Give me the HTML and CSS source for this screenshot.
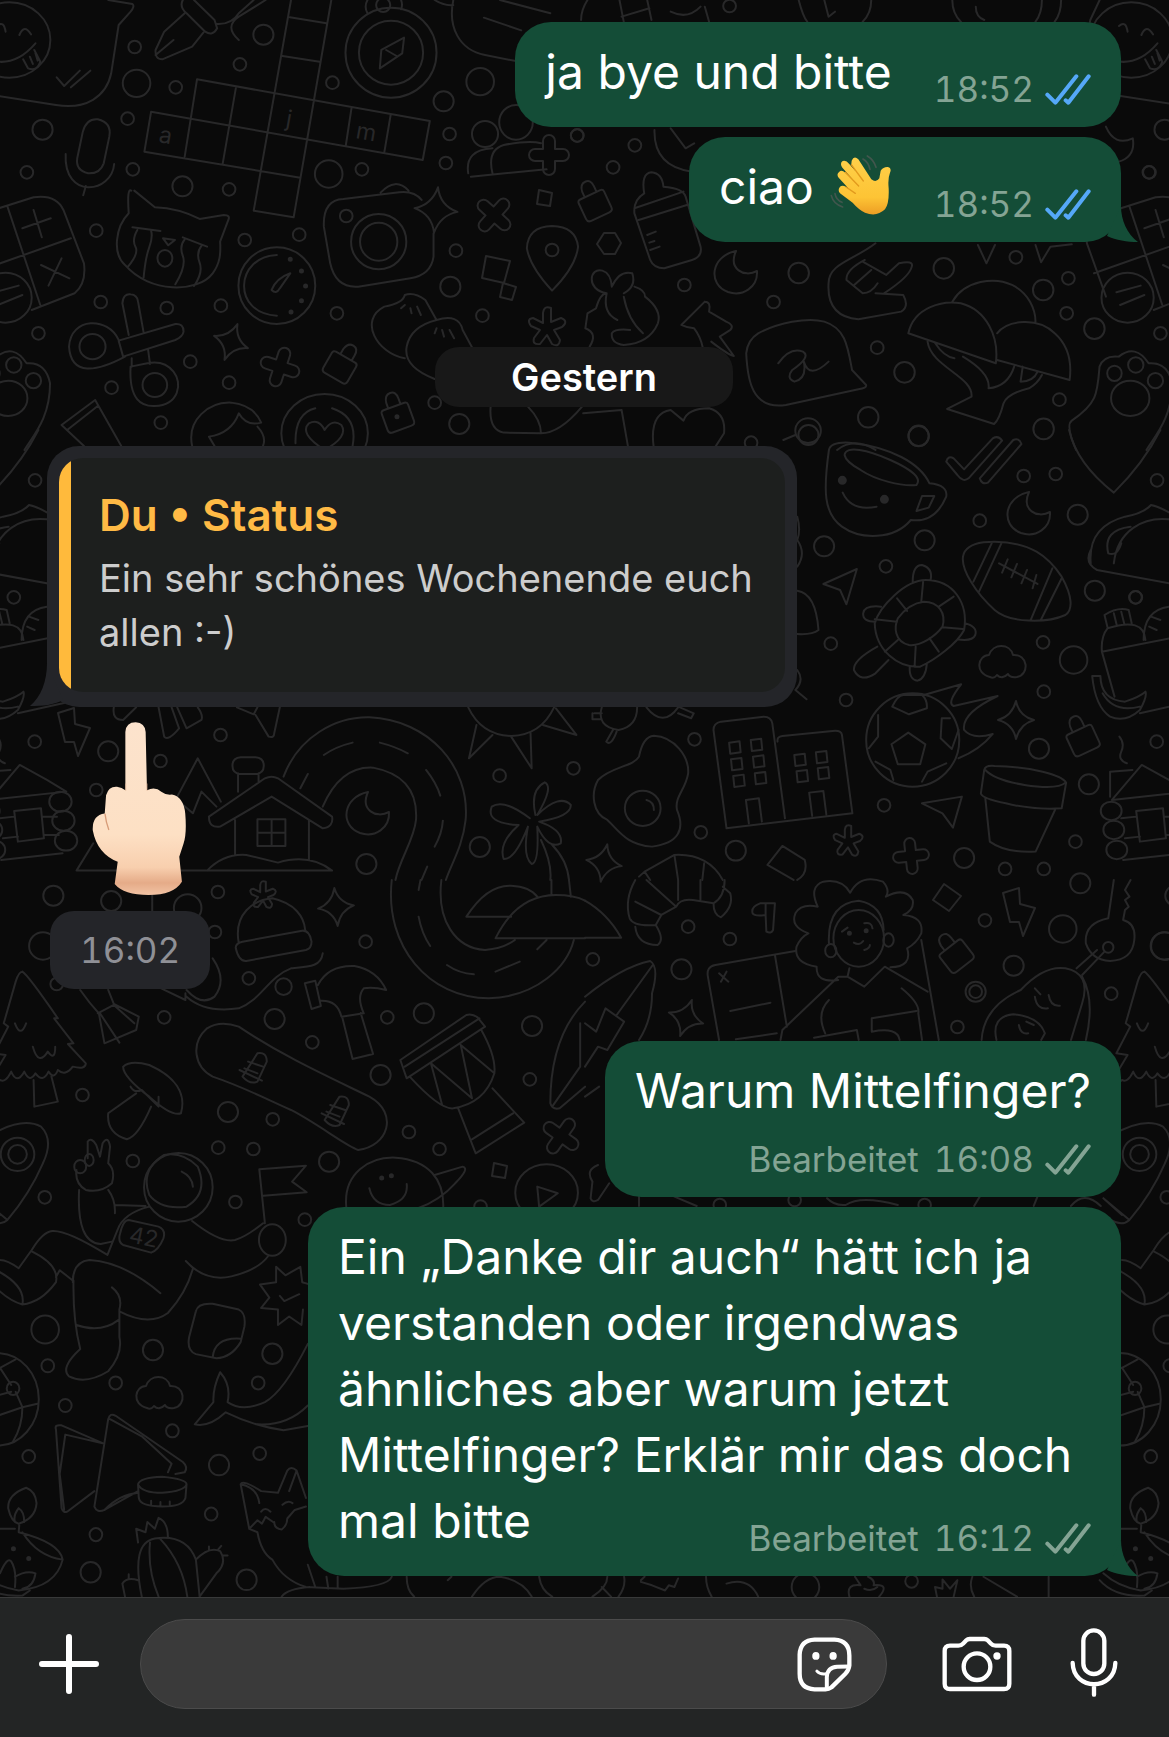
FILE: index.html
```html
<!DOCTYPE html>
<html lang="de">
<head>
<meta charset="utf-8">
<meta name="viewport" content="width=device-width, initial-scale=1">
<title>Chat</title>
<link rel="stylesheet" href="styles.css">
</head>
<body>
<main class="chat">
<svg class="wallpaper" viewBox="0 0 1169 1597" preserveAspectRatio="xMinYMin slice" aria-hidden="true">
<defs>
<ellipse id="s" rx="17" ry="19"/><ellipse id="m" rx="27" ry="30"/><ellipse id="l" rx="37" ry="41"/>
<ellipse id="s2" rx="15" ry="19"/><ellipse id="m2" rx="24" ry="31"/>
<path id="spark" d="M0-19Q3-4 18 0Q4 4 0 19Q-3 4-18 0Q-4-4 0-19Z"/>
<path id="plus" d="M-6-14a6 6 0 0 1 12 0v8h8a6 6 0 0 1 0 12h-8v8a6 6 0 0 1-12 0v-8h-8a6 6 0 0 1 0-12h8Z"/>
<path id="moon" d="M0-21C-25-16-29 12-8 20C7 25 22 15 21-1C8 6-8-3 0-21Z"/>
<path id="cloud" d="M-13 14C-29 10-25-8-14-8C-10-20 7-20 10-8C25-9 27 11 14 14Q7 15 5 11Q-1 17-6 12Q-9 16-13 14Z"/>
<path id="bolt" d="M-17-17L-1-22 0-6 15-2 3 26-1 12-10 12Z"/>
<path id="tag" d="M-11-9h22q3 0 3 3v17q0 4-4 4h-20q-4 0-4-4v-17q0-3 3-3ZM-6-9v-6q1-8 7-8t6 8v6"/>
<path id="aster" d="M-4-4V-14q1-8 8-5v14l10-4q8 3 1 9l-8 3 6 10q-1 8-8 4L0 8l-7 9q-8 1-6-6l6-8-9-4q-5-7 2-8Z"/>
<g id="doodles">
<g>
<use href="#spark" transform="translate(231 342) rotate(20)"/><use href="#spark" transform="translate(436 210) rotate(5) scale(1.2)"/><use href="#spark" transform="translate(1016 720)"/><use href="#spark" transform="translate(604 863) rotate(10)"/><use href="#spark" transform="translate(336 907) rotate(-5)"/><use href="#spark" transform="translate(686 1018) rotate(18)"/>
<use href="#plus" transform="translate(280 367) rotate(18)"/><use href="#plus" transform="translate(494 215) rotate(42)"/><use href="#plus" transform="translate(549 155)"/><use href="#plus" transform="translate(911 856) rotate(-6) scale(.9)"/><use href="#plus" transform="translate(561 1136) rotate(35)"/>
<use href="#moon" transform="translate(736 272)"/><use href="#moon" transform="translate(368 813)"/><use href="#moon" transform="translate(1029 513)"/>
<use href="#aster" transform="translate(547 327)"/><use href="#aster" transform="translate(848 841) scale(.8)"/><use href="#aster" transform="translate(263 895) scale(.7)"/>
<use href="#cloud" transform="translate(1003 663)"/><use href="#cloud" transform="translate(160 1394)"/>
<use href="#bolt" transform="translate(75 730)"/><use href="#bolt" transform="translate(1020 910)"/>
<use href="#tag" transform="translate(341 365) rotate(30)"/><use href="#tag" transform="translate(397 415) rotate(-20)"/><use href="#tag" transform="translate(594 203) rotate(-25)"/><use href="#tag" transform="translate(955 954) rotate(-38)"/><use href="#tag" transform="translate(1082 738) rotate(-25)"/>
<path d="M539 190l13 3-2 13-13-2ZM486 256l24 5-6 22-22-5ZM503 283l13 4-4 13-12-3ZM944 884l17 12-12 15-16-11ZM494 1163l13 3-2 12-13-2ZM604 233l11 0 6 10-6 11h-11l-7-10Z"/>
</g>
<g class="letters"><text x="158" y="142" transform="rotate(10 158 142)">a</text><text x="285" y="126" transform="rotate(10 285 126)">j</text><text x="355" y="138" transform="rotate(10 355 138)">m</text><text x="128" y="1242" transform="rotate(12 128 1242)">42</text></g>
<g transform="scale(.3731 .3333)">
<ellipse cx="25" cy="120" rx="110" ry="113"/>
<path d="M290 0L355 12Q362 18 350 35L318 75L298 220C285 290 230 330 150 315L-60 278Q-110 250-105 180L-85 60-60 0M52 105Q65 70 83 103M-8 78Q10 60 15 95M-50 170Q30 215 95 130M92 150L108 185Q100 215 75 205L62 178M80 170l8 22M95 160l6 22M152 232l20 26 42-46M190 262l52-50"/>
<path d="M222 395Q232 355 262 358Q300 368 293 410L278 490Q268 522 236 520Q202 510 207 475ZM176 462C170 600 300 580 306 492M230 558l-7 28"/>
<path d="M495 40L440 95 417 150Q415 178 435 178L515 140 545 98M417 165L465 120M490 0Q480 20 500 40L550 95Q570 110 582 85L575 60 520 0M580 72Q620 75 640 40L680 0M712 0L640 50Q600 80 640 120"/>
<path d="M528 238L1152 363 1133 480 405 335 387 455 805 533M528 238L495 470M632 265L597 490M780 0L680 632 787 652 888 0M777 52l98 18M757 168l100 17M942 325l-15 110M1047 345l-17 112"/>
<ellipse cx="1048" cy="158" rx="122" ry="135"/><ellipse cx="1048" cy="158" rx="86" ry="96"/><ellipse cx="1027" cy="15" rx="19" ry="21"/>
<path d="M1083 113L1078 160 1018 205 1022 150ZM1035 150l28 18M985 40Q975 20 985 0M1075 28Q1080 15 1075 0M1215 0C1200 80 1230 150 1300 165L1400 187M1340 0l135 40M1297 53l100 38M1165 0Q1190 18 1215 15"/>
<path d="M352 572Q340 560 345 640C310 680 300 760 335 795C400 880 530 880 570 820C590 790 592 760 590 725L612 660Q618 645 600 645L535 657Q480 625 415 622L360 572M355 682L430 693M490 712L555 740M368 690q-15 30-5 50t-20 60M405 692q5 20-5 50t-15 90M495 718q-15 20-5 50t-20 85M540 738q-15 20-5 50t-15 70M437 715l32 5-18 16Z"/><ellipse cx="442" cy="775" rx="20" ry="25"/>
<path d="M-60 645L90 592Q150 582 170 630L225 790Q232 850 200 880L85 930M-60 645Q-100 670-94 730L-43 890M20 620L108 915M-75 820L190 715M90 630l22 82M60 685l76-30M110 795l76 40M165 775l-35 82M-15 877l65-20M-5 915l65-30"/><ellipse cx="15" cy="893" rx="70" ry="75"/>
<path d="M1130 600Q1110 572 1070 577L920 597Q865 600 868 680L885 790Q900 865 960 860L1100 835Q1155 825 1162 770V700M1020 578Q1060 530 1095 572"/><ellipse cx="1015" cy="725" rx="74" ry="83"/><ellipse cx="1015" cy="725" rx="50" ry="57"/>
<ellipse cx="742" cy="857" rx="103" ry="115"/><path d="M742 765C630 770 620 940 742 947M778 820Q740 835 728 870Q740 885 750 865Z"/>
<path class="dot" d="M778 778h0M808 813h0M819 858h0M808 902h0M780 936h0M1064 1250h0"/>
<path d="M345 1005L328 910Q330 880 350 883Q368 885 370 905L385 998M318 1022L470 972Q492 970 492 995Q490 1010 470 1020L330 1070ZM318 1020C290 950 190 950 185 1040C190 1130 260 1115 335 1070M350 1100C345 1200 380 1220 415 1218C480 1215 490 1150 465 1115Q440 1080 395 1090ZM353 1075v25M397 1050l5 42"/><ellipse cx="248" cy="1040" rx="35" ry="38"/><ellipse cx="415" cy="1155" rx="33" ry="36"/>
<path d="M1255 520Q1245 450 1320 445M1262 530L1465 508M1320 520Q1305 450 1350 435Q1420 420 1450 430M1085 1075C1010 1060 960 960 1030 920Q1080 910 1085 885Q1110 875 1140 900L1170 960Q1100 980 1090 1040Q1080 1100 1165 1137M1170 960Q1230 940 1240 990L1265 1042M1085 915l-10 10m25 0l3 15m15-20l10 25M1170 985l-5 15m20-10l5 20m15-20l12 25"/><ellipse cx="1300" cy="402" rx="35" ry="39"/><ellipse cx="1383" cy="367" rx="45" ry="52"/>
<path d="M165 1275L255 1200 325 1338M165 1275L225 1338M180 1290L262 1218M515 1338C500 1260 560 1205 620 1208Q680 1215 700 1268Q660 1280 640 1240 620 1300 560 1310L575 1338M690 1280Q715 1310 705 1338M870 1350Q800 1300 828 1270Q855 1255 870 1290Q890 1255 915 1275Q935 1310 870 1350M792 1330Q790 1240 845 1225M890 1225Q960 1250 945 1338M1315 1220Q1310 1290 1350 1298L1450 1300Q1500 1300 1560 1220M1415 1220Q1450 1260 1450 1300"/><ellipse cx="870" cy="1300" rx="116" ry="118"/>
<use href="#l" x="366" y="250"/><use href="#l" x="1287" y="245"/><use href="#l" x="881" y="522"/><use href="#m" x="706" y="104"/><use href="#m" x="114" y="389"/><use href="#m" x="489" y="559"/><use href="#m" x="1189" y="304"/><use href="#m" x="1207" y="860"/><use href="#m" x="1231" y="1272"/>
<use href="#s" x="361" y="141"/><use href="#s" x="471" y="262"/><use href="#s" x="643" y="193"/><use href="#s" x="891" y="248"/><use href="#s" x="342" y="356"/><use href="#s" x="356" y="508"/><use href="#s" x="72" y="517"/><use href="#s" x="614" y="568"/><use href="#s" x="970" y="508"/><use href="#s" x="1205" y="402"/><use href="#s" x="1195" y="489"/><use href="#s" x="258" y="692"/><use href="#s" x="656" y="720"/><use href="#s" x="802" y="704"/><use href="#s" x="928" y="648"/><use href="#s" x="1222" y="752"/><use href="#s" x="270" y="906"/><use href="#s" x="447" y="924"/><use href="#s" x="592" y="917"/><use href="#s" x="903" y="940"/><use href="#s" x="1293" y="947"/><use href="#s" x="103" y="1000"/><use href="#s" x="510" y="1085"/><use href="#s" x="614" y="1148"/><use href="#s" x="299" y="1163"/><use href="#s" x="431" y="1268"/><use href="#s" x="1165" y="1208"/><use href="#s" x="1547" y="407"/>
</g>
<g transform="translate(500 0) scale(.4267 .3333)">
<path d="M122 678Q65 680 63 745Q70 800 122 872Q178 800 183 740Q178 680 122 678Z"/><use href="#s2" x="122" y="750"/>
<path d="M338 580Q330 520 355 517Q380 520 383 560Q430 565 435 590L470 740Q475 770 450 780L385 805Q360 805 352 780L315 640Q312 600 338 580M315 625L430 575M325 660L438 615M345 705l20-10M350 728l12-5M352 750l22-10"/>
<path d="M480 905L425 975Q440 985 455 985Q470 1010 475 1042M480 905Q495 905 490 935L530 965Q550 975 540 990L515 1010 548 1068Q535 1065 495 1025M210 1040Q230 1000 200 985L205 940 225 925Q235 880 250 880C200 870 210 800 240 812Q260 820 262 860Q280 810 310 820Q320 860 290 880M315 860Q340 870 340 890Q380 930 370 970Q350 1030 290 1035Q260 1030 262 1000Q270 985 305 990M250 880Q240 940 275 960M290 890Q300 960 335 1000"/>
<path d="M605 1000C650 970 720 950 760 965C810 985 815 1040 825 1110L858 1155Q860 1165 840 1168L670 1215C590 1230 580 1140 577 1060Q580 1020 605 1000ZM652 1090Q680 1040 710 1055Q730 1070 685 1110Q670 1135 690 1145Q720 1135 712 1085Q725 1140 770 1085"/>
<path d="M880 730C830 780 770 790 770 850Q765 950 840 958L940 935Q960 920 945 885L880 880M855 780Q810 810 812 840L850 880Q870 880 885 850M850 785L905 825 935 790Q970 780 965 800Q960 830 900 880M830 855l40-45"/>
<path d="M957 1000C970 920 1040 900 1080 910C1140 930 1170 1010 1162 1090ZM1060 905C1090 840 1160 830 1200 855C1240 880 1255 930 1255 965M1165 1000C1190 960 1260 950 1300 1000C1335 1040 1340 1090 1335 1140L1165 1080M1002 1025C1010 1100 1110 1130 1105 1190L1048 1227 1158 1272Q1170 1260 1180 1210 1190 1180 1240 1165 1260 1150 1270 1125M1085 1070Q1150 1120 1145 1165 1190 1160 1205 1100M1020 1030q20 40 45 45M1225 1100l-5 45q30 0 40-30"/>
<path d="M190 60Q190 30 205 0M280 0L290 65M285 50L350 25M345 0L355 60M400 35Q440 60 470 20M480 20L490 65M700 0Q710 50 720 65M870 0Q870 40 850 65M760 0L770 50 785 35M1060 0Q1060 40 1080 65M1115 20q0 30 20 40M1270 0q0 40-15 65M1315 0q0 40-15 65M362 390Q360 500 450 515M400 385l35 60 20-15M1420 380Q1440 440 1483 415Q1490 470 1450 485M1120 735L1140 790 1160 735M1255 735L1268 787 1290 740 1340 733M360 1340Q350 1240 400 1230L430 1262Q440 1225 490 1225Q530 1240 525 1300L505 1340M195 1240L285 1230 300 1340M692 1305l-28 15M790 1350Q830 1310 880 1350"/>
<ellipse cx="722" cy="1292" rx="30" ry="37"/>
<use href="#m2" x="700" y="819"/><use href="#m2" x="1040" y="805"/><use href="#m2" x="1273" y="870"/><use href="#m2" x="1393" y="986"/><use href="#m2" x="948" y="1117"/><use href="#m2" x="863" y="1252"/><use href="#m2" x="981" y="1308"/><use href="#m2" x="1274" y="1287"/>
<use href="#s2" x="538" y="18"/><use href="#s2" x="181" y="406"/><use href="#s2" x="316" y="436"/><use href="#s2" x="265" y="502"/><use href="#s2" x="432" y="855"/><use href="#s2" x="641" y="906"/><use href="#s2" x="1209" y="772"/><use href="#s2" x="1332" y="835"/><use href="#s2" x="1328" y="940"/><use href="#s2" x="884" y="1043"/><use href="#s2" x="1311" y="1199"/><use href="#s2" x="1522" y="517"/>
</g>
<g transform="translate(-622 0) scale(.4267 .3333)">
<path d="M1350 1350Q1325 1275 1340 1262C1400 1210 1400 1180 1405 1100Q1415 1065 1450 1070Q1490 1030 1520 1090Q1565 1085 1575 1150C1575 1250 1540 1300 1515 1350"/><ellipse cx="1440" cy="1120" rx="17" ry="23"/><ellipse cx="1490" cy="1095" rx="18" ry="23"/><ellipse cx="1536" cy="1142" rx="18" ry="23"/><ellipse cx="1477" cy="1195" rx="45" ry="53"/>
</g>
<g transform="translate(0 430) scale(.3731 .3333)">
<path d="M1255 832Q1290 915 1370 918Q1450 915 1485 832M1277 885L1257 985 1320 915M1370 920L1425 1015 1422 910M1455 885L1545 915 1490 835M305 832Q300 870 330 870L365 832M425 832L440 920Q450 935 480 895L460 832M475 832L500 895 540 870Q545 855 530 832M635 832L680 853 690 832M685 855L720 920Q735 925 735 910L750 832"/>
<path d="M760 1040C800 920 900 860 990 862C1150 870 1260 1010 1248 1170C1240 1250 1210 1300 1195 1350M865 1130C900 1040 950 1010 1000 1013C1080 1030 1120 1080 1115 1170C1110 1230 1070 1290 1060 1350M868 975Q900 950 945 938M1018 938Q1060 950 1093 970M1142 1020Q1170 1060 1180 1097M1187 1172Q1185 1210 1165 1250M1145 1310L1130 1350M805 1075l20-43"/>
<path d="M560 1160L710 1045Q728 1035 745 1045L890 1160Q895 1190 865 1195L728 1100 590 1190Q560 1195 560 1160M630 1170V1275M828 1170V1290M555 1322Q600 1270 660 1275L745 1298Q830 1270 890 1322L205 1322L250 1240M690 1168h75v80h-75ZM728 1168v80M690 1208h75M638 1085V1030M693 1055V1030M645 982h40q22 2 22 25t-22 25h-40q-22-2-22-25t22-25ZM475 1100L530 985 592 1115M480 1115L517 1150 540 1085 580 1130"/>
<path d="M1435 1155Q1420 1080 1460 1057Q1485 1070 1440 1155Q1500 1090 1530 1125Q1530 1160 1445 1175Q1510 1200 1503 1240Q1470 1260 1440 1190Q1445 1300 1425 1302Q1400 1280 1415 1190Q1380 1290 1350 1287Q1335 1240 1390 1185Q1300 1180 1318 1130Q1350 1105 1420 1165M1450 1230Q1480 1300 1475 1350M1480 1245Q1520 1290 1525 1350"/>
<ellipse cx="162" cy="1115" rx="30" ry="30"/><ellipse cx="170" cy="1172" rx="30" ry="30"/><ellipse cx="177" cy="1232" rx="30" ry="30"/>
<use href="#m" x="290" y="964"/><use href="#m" x="1286" y="1251"/><use href="#m" x="982" y="1302"/><use href="#s" x="94" y="151"/><use href="#s" x="37" y="502"/><use href="#s" x="93" y="935"/><use href="#s" x="430" y="993"/><use href="#s" x="591" y="915"/><use href="#s" x="258" y="1080"/><use href="#s" x="1339" y="1037"/><use href="#s" x="1537" y="1015"/>
</g>
<g transform="translate(585 430) scale(.3724 .3333)">
<path d="M655 60Q660 35 710 38C820 50 900 100 925 160Q975 165 970 200Q940 280 875 270C830 330 740 330 690 290C640 250 640 180 655 60ZM697 75C700 45 760 60 820 90C880 120 905 145 890 165C850 170 780 150 740 120Q700 95 697 75ZM905 198h33l-15 35-33 10ZM692 188Q715 245 783 230"/><path class="eye" d="M691 151h0M804 208h0"/>
<path d="M970 95Q975 75 990 85L1018 118 1095 25Q1110 15 1120 32L1030 145Q1015 158 1000 135ZM1060 145L1150 30Q1165 22 1172 42L1082 158Q1065 165 1060 145Z"/>
<path d="M1015 380Q1020 345 1070 337C1200 325 1250 390 1280 440C1310 500 1310 540 1290 555C1240 580 1140 580 1100 540C1050 490 1010 420 1015 380ZM1092 340L1043 455M1118 340L1058 485M1255 415L1197 570M1280 445L1225 568M1112 400L1215 462M1135 388l-15 40M1160 402l-15 40M1187 420l-15 40M1212 435l-10 40"/>
<path d="M915 450C990 450 1030 520 1018 600C1000 640 940 690 900 710C840 715 780 660 778 580C790 530 860 450 915 450ZM910 515C950 515 970 550 960 590C940 620 900 650 870 645C830 635 830 590 840 565Q870 520 910 515ZM880 455Q880 405 905 405Q935 415 928 450M780 575Q745 575 747 550Q750 525 795 530M1020 580Q1055 590 1048 615Q1040 635 1000 628M785 650Q720 690 722 720Q740 760 780 730L815 690M872 710Q870 750 893 752Q915 745 918 700M908 455l-5 60M990 500l-40 30M1015 597l-55-5M950 665l-25-40M885 710l3-60M805 665l35-35M778 568l60 7M838 505l27 38"/>
<path d="M640 462L730 417 702 523 685 480ZM905 1120L1012 1100 988 1193 960 1150Z"/>
<ellipse cx="880" cy="930" rx="125" ry="140"/><path d="M868 908l46 35-14 60h-60l-17-60ZM825 830Q840 795 855 795L905 795Q920 810 918 835L870 853ZM787 855V920L762 955M980 865H958L955 925 985 957 1003 900M780 995L820 1020 828 1050M970 1000L920 1025 905 1055M910 795L1010 763Q970 820 990 828L1108 798Q1010 850 1018 900Q1040 930 1095 912Q1060 960 1003 985"/>
<path d="M1072 1020Q1075 1005 1100 1008C1200 1010 1280 1035 1292 1058L1280 1135Q1200 1140 1130 1120Q1065 1105 1063 1090ZM1075 1020Q1100 1050 1180 1065Q1270 1080 1290 1058M1075 1105L1087 1235Q1130 1270 1210 1265L1262 1140"/>
<path d="M185 917C240 920 280 980 277 1030C270 1080 240 1100 247 1140C270 1200 250 1240 180 1250C110 1245 90 1200 60 1170C20 1150 15 1090 35 1050C70 1010 130 1010 145 980Q155 920 185 917ZM165 1110q20 5 20 30"/><ellipse cx="155" cy="1135" rx="48" ry="53"/>
<path d="M380 1195L345 900Q345 880 365 875L480 860Q500 860 503 880L537 1165M380 1195L718 1150 690 915Q688 900 665 903L530 918Q515 920 517 935M387 938l28-4 3 33-28 4ZM445 930l28-4 3 33-28 4ZM392 988l28-4 3 33-28 4ZM451 980l28-4 3 33-28 4ZM398 1038l28-4 3 33-28 4ZM456 1030l28-4 3 33-28 4ZM562 975l28-4 3 33-28 4ZM620 967l28-4 3 33-28 4ZM568 1024l28-4 3 33-28 4ZM625 1015l28-4 3 33-28 4ZM440 1180l-8-70 35-5 8 70M610 1158l-8-70 38-5 8 70"/>
<path d="M145 1340L160 1325 240 1275Q330 1270 370 1350M160 1325L175 1350M240 1275L250 1350M320 1300L315 1350M530 1248L490 1305 560 1350M530 1248L590 1290Q600 1330 570 1350M570 260Q580 300 570 330Q595 370 570 410M570 482Q620 490 627 600Q610 615 570 612M570 720Q590 750 565 780L595 808M45 832Q30 890 90 900Q140 890 140 832M165 832Q210 895 250 832M25 850h20M75 900L57 935Q70 950 85 905M250 850L285 865 292 850 255 832M20 850v18h25"/>
<use href="#l" x="1312" y="690"/><use href="#m" x="600" y="15"/><use href="#m" x="896" y="18"/><use href="#m" x="1323" y="254"/><use href="#m" x="912" y="331"/><use href="#m" x="642" y="349"/><use href="#m" x="1369" y="482"/><use href="#m" x="1219" y="956"/><use href="#m" x="1353" y="1063"/><use href="#m" x="1018" y="1284"/><use href="#m" x="405" y="1262"/>
<use href="#s" x="446" y="38"/><use href="#s" x="1178" y="138"/><use href="#s" x="1264" y="132"/><use href="#s" x="1060" y="272"/><use href="#s" x="808" y="409"/><use href="#s" x="1478" y="502"/><use href="#s" x="1230" y="637"/><use href="#s" x="660" y="641"/><use href="#s" x="1232" y="785"/><use href="#s" x="701" y="810"/><use href="#s" x="294" y="928"/><use href="#s" x="311" y="1207"/><use href="#s" x="803" y="1126"/><use href="#s" x="1317" y="1235"/><use href="#s" x="1128" y="1317"/><use href="#s" x="1232" y="1317"/>
</g>
<g transform="translate(-537 430) scale(.3724 .3333)">
<path d="M1300 0Q1320 100 1420 188Q1500 100 1545 0M1358 400Q1350 290 1450 260Q1500 250 1520 225Q1545 230 1590 262M1375 420L1640 475M1420 400C1430 300 1500 260 1568 268C1640 290 1650 400 1640 475M1375 420Q1340 400 1358 360M1465 290Q1390 300 1405 370Q1430 380 1440 340"/>
<path d="M1403 592L1395 555Q1430 530 1460 540L1468 580M1420 550l8 36M1440 545l8 36M1388 665Q1385 620 1403 595Q1500 560 1505 630M1388 665L1570 625M1388 665L1422 800M1490 850L1650 810M1500 630Q1500 540 1568 530M1520 560l25 10M1515 590l20 10M1362 738h22Q1385 810 1450 815 1490 800 1505 785Q1510 800 1490 840Q1450 880 1410 860Q1370 830 1362 738ZM1390 790Q1420 850 1490 830"/>
<path d="M1415 1110L1495 1005 1568 1050 1620 1085ZM1410 1100V1025L1470 1020M1435 920q15 20 5 45t15 35M1440 1165l40-5M1450 1225L1490 1220M1555 1160h40M1560 1215h40M1480 1143l72-8 8 90-70 10ZM1445 1290L1610 1270"/>
<ellipse cx="1413" cy="1143" rx="28" ry="28"/><ellipse cx="1420" cy="1200" rx="28" ry="28"/><ellipse cx="1428" cy="1260" rx="28" ry="28"/>
</g>
<g transform="translate(0 880) scale(.3731 .3333)">
<path d="M1478 0v45M1525 0l5 50M1370 110H1250C1290 40 1330 15 1370 17Q1420 20 1440 50M1568 175H1328C1370 80 1430 45 1490 45Q1540 45 1568 62M1465 180l-25 28M1050 0C1030 200 1150 355 1310 355C1440 350 1520 260 1538 180M1183 0C1170 120 1220 205 1300 210Q1350 205 1380 180M1127 0l-5 30M1122 110Q1130 160 1153 198M1198 255Q1230 280 1270 283M1328 275L1393 245"/>
<path d="M640 190C625 100 680 60 730 55C790 70 815 110 818 150M632 205Q630 190 650 185L810 152Q830 150 835 185Q835 205 820 210L660 243Q640 245 632 205ZM408 45v48M432 325L497 360V340M500 350Q550 400 640 385C700 360 720 290 780 265C830 260 860 260 865 220M570 235Q610 300 575 350Q540 380 500 330"/><ellipse cx="760" cy="320" rx="22" ry="25"/>
<path d="M817 310L845 302 860 378 835 387ZM852 315Q880 255 950 258Q1010 270 1035 330Q1000 320 975 325Q955 350 975 400L915 410Q905 360 860 362M917 410L945 537 1000 522 967 400"/>
<path d="M1073 540L1250 405Q1265 400 1280 412L1300 440 1090 595ZM1085 560L1285 415M1098 590Q1180 690 1215 685Q1300 670 1325 580Q1330 530 1290 450M1228 685L1275 820 1405 728 1320 625M1265 778L1375 700M1185 675L1155 550 1265 655 1235 495 1325 580"/>
<path d="M60 275Q50 275 42 305L10 430 22 440-15 520 15 525-25 600Q-15 620 0 600M60 275Q75 285 155 415L145 415 197 490 182 492 230 550Q230 570 195 560 175 590 155 570 145 600 130 575 115 610 95 580 80 610 65 575 45 615 30 575 15 610 0 600M90 600L92 680 155 665 138 590M40 430q15 45 30 0M88 500q15 60 40 15q20 30 20-15"/>
<path d="M330 560Q350 540 400 555C470 590 500 640 485 700Q460 710 400 650Q330 590 330 560ZM365 640L290 700Q285 760 340 778Q370 770 405 680M350 620q10 20 30 10M380 630L425 680V650M215 330Q240 370 265 400L280 490 365 450 372 410 305 372 290 330M262 400L305 375M268 400L320 488M305 375L360 430"/>
<path d="M555 445Q590 420 640 440C760 530 880 590 990 650C1070 700 1040 800 960 810C930 800 850 730 780 690C700 650 650 620 570 590C520 560 510 490 555 445ZM690 520Q715 515 715 545L690 605Q670 615 650 590ZM655 565l35 15M665 545l40 15M642 570l60 32M910 650Q935 645 935 675L910 735Q890 745 870 720ZM875 695l35 15M885 675l40 15M862 700l60 32"/>
<path d="M-25 765Q60 710 110 740Q145 780 115 850Q80 940 20 1020Q0 1040-30 1020M-50 955L20 1020M-50 955L0 1005"/><ellipse cx="47" cy="823" rx="25" ry="28"/><ellipse cx="47" cy="823" rx="45" ry="50"/>
<ellipse cx="478" cy="922" rx="92" ry="103"/><path d="M440 825Q375 870 400 945Q430 990 500 980Q560 940 530 860Q490 815 440 825M487 875Q515 890 517 920M235 835V785Q245 770 258 795L268 830 275 790Q290 765 295 800L290 850Q310 870 300 910Q270 940 230 930Q200 910 205 870M212 930Q205 1090 270 1092L300 1085M290 930Q310 960 308 1000M308 975L390 978M400 980Q330 1000 315 1050L288 1125Q180 1050 140 1053Q115 1055 85 1110L50 1165Q20 1140 0 1140M515 1023Q590 1090 630 1080Q660 1070 705 1030M345 1020L425 1040Q445 1050 438 1075Q425 1110 405 1118L330 1095Q315 1085 322 1060Q330 1020 345 1020ZM706 947L822 937 783 905 820 857 695 868 710 1030"/><ellipse cx="215" cy="860" rx="16" ry="20"/><ellipse cx="239" cy="840" rx="12" ry="18"/><ellipse cx="730" cy="1080" rx="36" ry="47"/>
<path d="M928 980C920 880 990 830 1060 833C1150 840 1190 900 1188 980M990 925Q1000 975 1045 975Q1095 960 1090 912M1165 885L1240 860Q1260 865 1220 910Q1180 960 1120 985M1440 920l5 60 50-40ZM1568 365Q1475 470 1475 670Q1480 690 1500 685L1568 620M1555 430v130L1480 680"/><ellipse cx="1465" cy="938" rx="84" ry="85"/><path class="dot" d="M1023 894h0M1049 887h0"/>
<use href="#l" x="503" y="84"/><use href="#l" x="115" y="198"/><use href="#m" x="143" y="47"/><use href="#m" x="298" y="63"/><use href="#m" x="736" y="417"/><use href="#m" x="1136" y="400"/><use href="#m" x="1426" y="438"/><use href="#m" x="1020" y="585"/><use href="#m" x="611" y="696"/><use href="#m" x="882" y="845"/>
<use href="#s" x="584" y="36"/><use href="#s" x="576" y="156"/><use href="#s" x="980" y="185"/><use href="#s" x="667" y="295"/><use href="#s" x="440" y="412"/><use href="#s" x="1038" y="412"/><use href="#s" x="837" y="487"/><use href="#s" x="1420" y="598"/><use href="#s" x="221" y="645"/><use href="#s" x="731" y="718"/><use href="#s" x="1096" y="756"/><use href="#s" x="585" y="803"/><use href="#s" x="679" y="807"/><use href="#s" x="1178" y="807"/><use href="#s" x="356" y="843"/><use href="#s" x="120" y="952"/><use href="#s" x="631" y="966"/><use href="#s" x="817" y="1019"/><use href="#s" x="1288" y="980"/><use href="#s" x="152" y="312"/>
</g>
<g transform="translate(585 880) scale(.3724 .3333)">
<path d="M0 62Q60 100 97 173H0M0 350Q100 260 175 243Q200 260 180 340Q180 420 145 480M0 430L30 455 55 385 105 425 60 510 35 500 0 560M182 255L85 405M0 650L38 620"/>
<path d="M135 0Q105 60 120 115Q130 140 190 135L205 105 245 80Q255 55 290 60L345 70Q375 50 375 0M135 65L205 105M165 0L245 80M250 0V60M310 0V60M135 140Q140 195 195 195Q215 180 190 135M345 70Q345 105 365 112Q400 80 390 40L370 20"/>
<path d="M680 300Q620 310 622 260Q560 250 568 200Q580 170 600 160Q550 140 565 100Q580 70 625 80Q600 20 640 5Q690-5 712 38Q740-20 800 5Q820 30 808 50Q860 20 880 60Q885 90 855 105Q910 110 903 160Q890 190 865 205Q880 260 820 262M655 190Q650 70 735 62Q800 75 802 150M710 265L705 290 750 320 805 260 920 335M705 290L680 290 530 450 525 480M655 360Q620 400 645 460M850 325Q900 370 895 400L905 480M770 415L890 393M615 473L730 450 735 480M770 415V455Q840 440 845 480M903 180L950 480M510 225L542 440M690 155l15-12M750 130q20-5 22 15M722 188q15 10 25-5M750 210q15-5 15-15"/><ellipse cx="735" cy="175" rx="68" ry="85"/><ellipse cx="660" cy="212" rx="15" ry="20"/><ellipse cx="815" cy="180" rx="14" ry="20"/><path class="dot" d="M710 160h0M755 152h0"/>
<path d="M360 480L330 290Q325 260 350 255L565 213M390 393l108-25M405 478l110-18M360 280l25 25M380 275l-15 30M510 70L470 70Q445 80 450 100Q455 110 485 105L487 155Q500 162 505 150ZM485 72v33"/>
<path d="M1420 0L1405 115Q1340 130 1345 190Q1360 240 1410 243Q1470 240 1475 180Q1480 130 1445 120L1450 90 1460 80 1450 60 1462 50 1450 30 1465 0M1395 215L1335 285M1375 210L1320 265M1065 480Q1070 380 1170 330C1220 270 1260 260 1290 265Q1360 280 1335 370L1305 480M1335 290Q1370 360 1345 480M1105 480Q1090 410 1150 403Q1220 410 1235 460L1225 480M1208 325l15 18M1208 350q5 40 35 35M1245 345q5 35 30 32M1165 435q5 30 25 25M1185 425l20 10"/><ellipse cx="1405" cy="202" rx="14" ry="16"/>
<path d="M35 855Q0 870 20 905L15 955Q20 970 35 960L65 910M145 950v28M240 950l60 28M650 955Q670 978 700 975Q740 945 840 975M1060 950l-15 28M1215 950l-10 28M1305 978Q1340 930 1385 978"/>
<use href="#l" x="1283" y="147"/><use href="#l" x="1556" y="198"/><use href="#m" x="259" y="268"/><use href="#m" x="1151" y="257"/><use href="#m" x="1049" y="335"/><use href="#s" x="1049" y="335"/><use href="#m" x="1330" y="10"/><use href="#s" x="277" y="140"/><use href="#s" x="389" y="177"/><use href="#s" x="21" y="238"/><use href="#s" x="1074" y="121"/><use href="#s" x="1413" y="341"/><use href="#s" x="1000" y="441"/><use href="#s" x="362" y="975"/><use href="#s" x="563" y="960"/><use href="#s" x="912" y="975"/>
</g>
<g transform="translate(0 1200) scale(.3731 .3425)">
<path d="M85 150Q160 190 150 240Q110 300 60 305Q10 290-40 220M60 305Q70 250-10 205M150 225L160 205 195 235M195 240Q195 180 240 175Q330 180 430 272M197 235Q195 350 215 435Q160 490 185 515Q230 540 290 500Q330 450 320 400V320Q330 280 300 255M205 365Q270 390 318 350M320 325Q400 370 450 330Q500 270 517 200M498 178Q550 240 620 223Q690 205 718 165M697 247L740 240 740 195 765 220 805 195 810 240 825 245M697 247L722 285 700 315 745 320 745 365 775 340 808 365 812 320M750 280l12 15 40-20"/>
<path d="M525 325Q530 300 570 303L640 320Q660 330 655 370L645 415Q620 460 580 462L525 450Q500 440 507 400ZM570 460Q575 400 645 405M590 503Q570 550 572 590L522 655Q560 665 605 620Q680 660 760 672L825 660M590 503Q620 540 610 590Q650 620 710 590Q760 560 825 420M690 655Q770 660 825 600"/>
<ellipse cx="-6" cy="582" rx="110" ry="135"/><path d="M-80 500L0 490 30 540M0 490L42 465M42 560L60 605 100 595M60 605Q60 660 35 705M60 605L-60 650M30 560L-40 580"/><use href="#s" x="35" y="550"/>
<path d="M275 710L165 658Q145 655 150 670L165 900Q170 915 180 910L253 850M275 710L175 685 160 800 172 905M490 765L310 630Q295 620 290 640L253 895Q260 915 280 905L370 850M490 765Q505 780 495 795L470 800M295 640L380 690 460 770 450 795M280 905Q320 860 370 855M370 830Q375 810 435 808Q500 815 500 830L497 870Q490 895 435 895Q375 895 372 870ZM370 830Q380 855 435 855Q495 850 500 830M405 878v12M430 882v12M455 880v12"/>
<path d="M70 840Q20 860 22 900Q30 940 50 945Q95 930 98 885Q95 850 70 840ZM50 900Q35 920 40 940M50 900Q65 910 65 940M52 945L50 970Q160 1000 168 1050Q150 1130 50 1140Q-10 1130-50 1090M60 970Q100 1040 168 1050M-20 960H40M0 1090Q20 1040 30 1055Q45 1080 40 1130M40 1100Q70 1080 95 1090Q90 1130 60 1135M-60 1110Q-20 1160 60 1155L80 1140"/><path class="dot" d="M36 1018h0M77 1047h0"/>
<path d="M380 1158Q350 1000 415 988Q500 975 525 1050L535 1158M402 1000Q395 1080 425 1158M430 990Q490 1060 502 1158M525 1050Q560 1010 590 1025Q610 1060 580 1090L535 1158M370 1110Q340 1100 328 1120L335 1158M370 1000L365 960 390 970 395 940 415 960 425 928Q450 940 450 985M560 1022v-10M585 1020l8-10M598 1038h12M345 1105v-12"/>
<path d="M668 960L645 830Q650 815 700 850L745 855 770 790Q780 775 795 790L820 870M645 830Q690 840 695 885M775 850L795 790M668 960L690 970Q700 1030 730 1050Q760 1110 820 1130L920 1135Q1040 1130 1050 1100M668 960l22-25 12 10 10-20 20 15M700 910q10-15 25 0M757 890q15-15 27-5M735 940Q735 960 755 962 770 950 770 930L790 905 820 895M755 1158Q770 1135 830 1130M825 1065L845 1130M875 1100l5 35M905 1100v30M1090 1100Q1090 1140 1110 1158M1265 1158Q1300 1100 1340 1100Q1400 1110 1425 1158M1445 1100Q1450 1140 1480 1158M1200 1110l10-10"/>
<use href="#l" x="121" y="378"/><use href="#m" x="410" y="438"/><use href="#m" x="730" y="449"/><use href="#m" x="587" y="774"/><use href="#m" x="243" y="1087"/><use href="#m" x="661" y="1109"/><use href="#s" x="128" y="484"/><use href="#s" x="310" y="534"/><use href="#s" x="692" y="534"/><use href="#s" x="175" y="600"/><use href="#s" x="462" y="674"/><use href="#s" x="696" y="740"/><use href="#s" x="77" y="749"/><use href="#s" x="566" y="917"/><use href="#s" x="257" y="977"/>
</g>
<g transform="translate(585 1200) scale(.3724 .3425)">
<path d="M45 1130L70 1158M20 1158Q60 1130 60 1100M105 1100Q110 1130 90 1158M150 1110L160 1100M250 1105L240 1130 225 1125 215 1140 180 1125 150 1115M325 1100Q325 1130 340 1158M380 1120Q440 1100 465 1158M1040 1100Q1030 1130 1045 1158M1070 1100L1160 1158M1245 1100v58M710 1158Q700 1120 740 1125L725 1100M760 1100Q780 1110 775 1125 820 1120 790 1158M750 1135q20 10 35-5M945 1158L940 1130 960 1135 960 1108 980 1135 1000 1110 990 1158"/><use href="#l" x="592" y="1130"/><use href="#s" x="877" y="1113"/>
</g>
</g>
</defs>
<use href="#doodles"/><use href="#doodles" x="1122"/>
</svg>

<svg class="sprite" aria-hidden="true">
<symbol id="ticks" viewBox="676 172 138 93"><path d="M683 234l24 24 63-79M738 251l8 7 61-79" fill="none" stroke="currentColor" stroke-width="12" stroke-linecap="round" stroke-linejoin="round"/></symbol>
</svg>

<section class="bubble bubble--out bubble--row">
<p class="text">ja bye und bitte</p>
<p class="meta"><time>18:52</time><svg class="ticks ticks--read" role="img" aria-label="Gelesen"><use href="#ticks"/></svg></p>
</section>
<section class="bubble bubble--out bubble--row">
<p class="text text--wave">ciao
<svg class="wave" viewBox="40 72 186 186" role="img" aria-label="Winkende Hand">
<defs><linearGradient id="gold" x1="0" y1="0" x2="0" y2="1"><stop offset="0" stop-color="#ffd04a"/><stop offset=".7" stop-color="#fdc435"/><stop offset="1" stop-color="#ed9e24"/></linearGradient></defs>
<g fill="none" stroke="#41564d" stroke-width="5" stroke-linecap="round"><path d="M139 87Q155 96 160 118M152 78Q172 90 178 112M55 191Q58 210 76 217M44 197Q50 222 78 231"/></g>
<path fill="url(#gold)" d="M105 92Q112 76 125 88L164 148Q178 160 188 145L192 122Q200 110 214 111Q226 114 220 128Q213 145 216 175Q218 220 205 238Q180 262 145 248Q125 238 108 218L70 190Q62 180 70 170Q78 164 88 171L98 178L66 143Q58 132 68 125Q75 119 86 128L112 153L76 112Q69 99 78 93Q88 89 97 101L117 124L104 102Z"/>
<path d="M104 104L140 153M86 127L126 168M88 171L116 190" stroke="#e29a1d" stroke-width="4" fill="none" stroke-linecap="round"/>
</svg></p>
<p class="meta"><time>18:52</time><svg class="ticks ticks--read" role="img" aria-label="Gelesen"><use href="#ticks"/></svg></p>
<svg class="tail" viewBox="0 0 48 40" aria-hidden="true"><path d="M31 4C31 18 37 32 48 40C37 40 26 38 17 34Z"/></svg>
</section>

<h2 class="day">Gestern</h2>

<section class="bubble bubble--in">
<blockquote class="quote">
<h3 class="quote-title">Du • Status</h3>
<p class="quote-text">Ein sehr schönes Wochenende euch allen :-)</p>
</blockquote>
<svg class="tail tail--in" viewBox="0 0 48 44" aria-hidden="true"><path d="M17 0C17 18 11 34 0 43C13 43 24 42 33 37Z"/></svg>
</section>
<section class="reaction">
<svg class="finger" viewBox="92 62 288 526" role="img" aria-label="Mittelfinger">
<defs><linearGradient id="skin" x1="0" y1="0" x2="0" y2="1"><stop offset="0" stop-color="#fce3cd"/><stop offset=".65" stop-color="#fde0c4"/><stop offset=".84" stop-color="#f8cfae"/><stop offset=".93" stop-color="#e5ab88"/><stop offset="1" stop-color="#f2c3a4"/></linearGradient></defs>
<path fill="url(#skin)" d="M195 95Q197 66 226 66Q254 68 256 95L260 270Q285 258 303 275Q315 285 335 283Q370 290 375 340Q380 400 370 430L357 470 365 545Q340 585 265 585Q190 585 163 552L172 485Q110 460 97 390Q95 345 133 340L137 285Q145 258 170 260Q185 262 195 270Z"/>
<path d="M134 342Q137 368 145 388" fill="none" stroke="#d79c78" stroke-width="4" stroke-linecap="round"/>
<path d="M196 250V272M260 250V272" fill="none" stroke="#eab997" stroke-opacity=".5" stroke-width="4"/>
</svg>
<p class="stamp"><time>16:02</time></p>
</section>

<section class="bubble bubble--out">
<p class="text">Warum Mittelfinger?</p>
<p class="meta meta--below"><span>Bearbeitet</span><time>16:08</time><svg class="ticks" role="img" aria-label="Zugestellt"><use href="#ticks"/></svg></p>
</section>
<section class="bubble bubble--out">
<div class="text text--flow">Ein „Danke dir auch“ hätt ich ja verstanden oder irgendwas ähnliches aber warum jetzt Mittelfinger? Erklär mir das doch mal bitte
<p class="meta meta--float"><span>Bearbeitet</span><time>16:12</time><svg class="ticks" role="img" aria-label="Zugestellt"><use href="#ticks"/></svg></p></div>
<svg class="tail" viewBox="0 0 48 40" aria-hidden="true"><path d="M31 4C31 18 37 32 48 40C37 40 26 38 17 34Z"/></svg>
</section>
</main>

<form class="composer">
<button class="icon-btn" type="button" aria-label="Anhang hinzufügen"><svg width="60" height="60" viewBox="0 0 60 60"><path d="M30 3v54M3 30h54" stroke-width="6"/></svg></button>
<div class="field">
<input type="text" aria-label="Nachricht">
<button class="icon-btn" type="button" aria-label="Sticker"><svg width="55" height="55" viewBox="49 79 166 166"><g stroke-width="13"><path d="M102 87H162Q207 89 207 135V165Q205 180 195 190L153 231Q145 237 135 237H102Q57 235 57 190V132Q59 89 102 87Z"/><path d="M139 236V200Q141 170 170 169L206 168" stroke-width="12"/><path d="M109 182Q118 193 138 190" stroke-width="9"/></g><g class="solid"><ellipse cx="106" cy="136" rx="11" ry="12"/><ellipse cx="158" cy="136" rx="11" ry="12"/></g></svg></button>
</div>
<button class="icon-btn icon-btn--camera" type="button" aria-label="Kamera"><svg width="70" height="56" viewBox="487 78 210 168"><g stroke-width="13"><path d="M511 107H536Q545 107 550 101L560 91Q564 87 570 87H614Q620 87 624 91L634 101Q639 107 648 107H673Q689 107 689 123V221Q689 237 673 237H511Q495 237 495 221V123Q495 107 511 107Z"/><circle cx="592" cy="170" r="40"/></g><circle class="solid" cx="652" cy="138" r="11"/></svg></button>
<button class="icon-btn" type="button" aria-label="Sprachnachricht"><svg width="50" height="75" viewBox="867 50 150 225"><g stroke-width="13"><rect x="910" y="60" width="63" height="131" rx="31.5"/><path d="M878 158C880 243 1004 243 1006 158M942 224v29"/></g></svg></button>
</form>
</body>
</html>
```
FILE: styles.css
```css
* { box-sizing: border-box; }

body {
  margin: 0;
  min-height: 100vh;
  display: flex;
  flex-direction: column;
  background: #0a0a0a;
  color: #fff;
  font-family: Inter, "Liberation Sans", sans-serif;
}

h2, h3, p, blockquote { margin: 0; }

/* Conversation */
.chat {
  flex: 1;
  position: relative;
  z-index: 0;
  overflow: hidden;
  display: flex;
  flex-direction: column;
  gap: 10px;
  padding: 22px 48px 21px 47px;
}

.wallpaper {
  position: absolute;
  inset: 0;
  z-index: -1;
  width: 100%;
  height: 100%;
  fill: none;
  stroke: #282829;
  stroke-width: 2px;
  stroke-linecap: round;
  stroke-linejoin: round;
}
.wallpaper path,
.wallpaper ellipse { vector-effect: non-scaling-stroke; }
.wallpaper .dot { stroke-width: 5px; }
.wallpaper .eye { stroke-width: 9px; }
.wallpaper .letters { fill: #282829; stroke: none; font-size: 23px; }

.sprite { position: absolute; width: 0; height: 0; }

/* Bubbles */
.bubble {
  position: relative;
  display: flex;
  flex-direction: column;
  max-width: 813px;
  border-radius: 36px;
}
.bubble--out {
  align-self: flex-end;
  padding: 17px 30px;
  background: #144d37;
}
.bubble--row {
  flex-direction: row;
  align-items: flex-end;
  gap: 42px;
}
.bubble--in {
  align-self: flex-start;
  max-width: 750px;
  padding: 12px 12px 15px;
  border-radius: 32px;
  background: #242529;
}

.text {
  margin-bottom: 5px;
  font-size: 48px;
  line-height: 66px;
}
.text--wave { display: flex; gap: 16px; }
.text--flow { display: flow-root; margin-bottom: 0; }
.wave { width: 62px; height: 62px; }

.meta {
  display: flex;
  align-items: center;
  align-self: flex-end;
  gap: 15px;
  color: #84a494;
  font-size: 35px;
  line-height: 42px;
}
.meta time,
.stamp time { font-variant-numeric: tabular-nums; }
.meta--below { margin-top: 9px; }
.meta--float { float: right; margin-top: 29px; }
.ticks { width: 46px; height: 31px; margin-left: -4px; }
.ticks--read { color: #55a8f8; }

.tail {
  position: absolute;
  right: -17px;
  bottom: 0;
  width: 48px;
  height: 40px;
  fill: #144d37;
}
.tail--in {
  right: auto;
  left: -17px;
  height: 44px;
  fill: #242529;
}

.day {
  align-self: center;
  margin: 95px 0 29px;
  padding: 0 76px;
  border-radius: 24px;
  background: #181818;
  font-size: 38px;
  font-weight: 600;
  line-height: 60px;
}

.quote {
  padding: 28px 28px 33px 40px;
  border-radius: 24px;
  background: linear-gradient(to right, #ffba3c 12px, #1d1f1e 12px);
}
.quote-title {
  margin-bottom: 7px;
  color: #ffba45;
  font-size: 44px;
  font-weight: 600;
  line-height: 58px;
}
.quote-text {
  color: #cdcdcd;
  font-size: 38px;
  line-height: 54px;
}

.reaction {
  align-self: flex-start;
  display: flex;
  flex-direction: column;
  gap: 15px;
  margin: 4px 0 42px 3px;
}
.finger { width: 96px; height: 175px; margin-left: 41px; }
.stamp {
  align-self: flex-start;
  padding: 0 30px;
  border-radius: 24px;
  background: #242529;
  color: #8f9096;
  font-size: 35px;
  line-height: 78px;
}

/* Composer */
.composer {
  display: flex;
  align-items: center;
  padding: 21px 50px 28px 39px;
  border-top: 1px solid #383939;
  background: #232525;
}
.icon-btn {
  display: flex;
  flex: none;
  padding: 0;
  border: 0;
  background: none;
  color: #fff;
}
.icon-btn svg {
  fill: none;
  stroke: currentColor;
  stroke-linecap: round;
  stroke-linejoin: round;
}
.icon-btn .solid { fill: currentColor; stroke: none; }
.icon-btn--camera { margin: 0 57px 0 55px; }
.field {
  flex: 1;
  min-width: 0;
  display: flex;
  align-items: center;
  height: 90px;
  margin-left: 41px;
  padding: 0 34px 0 40px;
  border: 1px solid #4b4b4b;
  border-radius: 45px;
  background: #3a3a3a;
}
.field input {
  flex: 1;
  width: 100%;
  min-width: 0;
  border: 0;
  outline: 0;
  background: none;
  color: #fff;
  font: inherit;
  font-size: 48px;
}
```
